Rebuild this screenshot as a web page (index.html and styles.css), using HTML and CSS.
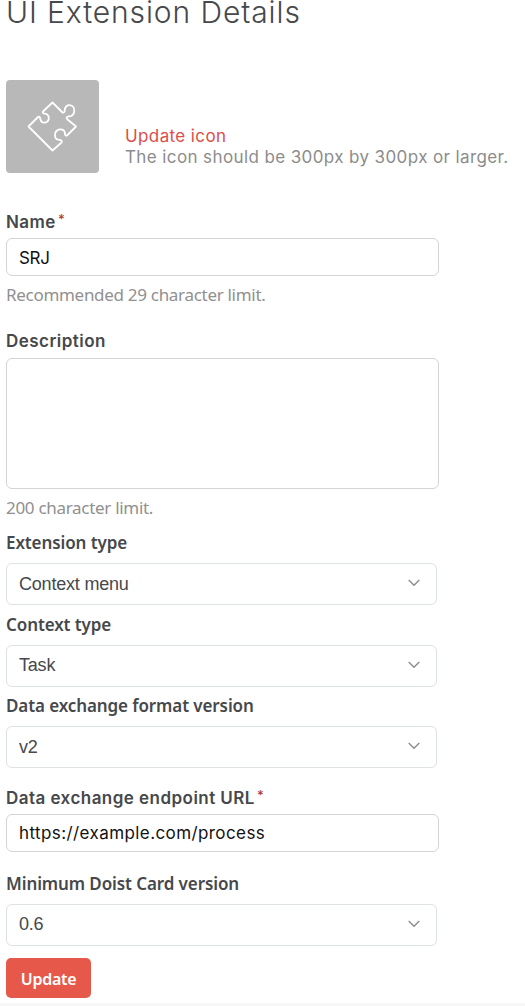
FILE: index.html
```html
<!DOCTYPE html>
<html lang="en">
<head>
<meta charset="utf-8">
<title>UI Extension Details</title>
<link rel="stylesheet" href="styles.css">
</head>
<body>
<main class="page">
  <h1 class="title">UI Extension Details</h1>
  <section class="icon-row">
    <div class="icon-box">
      <svg width="93" height="93" viewBox="0 0 93 93" fill="none" stroke="#fff" stroke-width="1.8" stroke-linejoin="round"><path d="M46.500 22.500L56 32C57.500 33.500 59 32 58.700 30.500C59 22.500 69 24 68.300 31C68 35 65 36.500 62 36.500C60 37 60.500 38.500 61.500 39.500L70 46.500L61.500 55C60 56.500 58.500 55 59 53C58 47 48.500 48.500 49 56C49.200 59 51.500 60 54.500 60C56 60.500 56.500 61.500 55 63L46.500 70.500L22.500 46.500L31.500 37.500C33 36 34.500 37 34.300 39C35.500 44.500 43 43.500 42.800 37.500C42.500 34.500 40 33.500 37.500 33.300C36.500 33 36.500 32 37.500 31Z"/></svg>
    </div>
    <div class="icon-copy">
      <a class="update-link">Update icon</a>
      <p class="icon-note">The icon should be 300px by 300px or larger.</p>
    </div>
  </section>
  <form class="form">
    <div class="field field-name">
      <label class="label inter">Name<sup class="req">*</sup></label>
      <div class="input short">SRJ</div>
      <p class="help">Recommended 29 character limit.</p>
    </div>
    <div class="field field-description">
      <label class="label inter">Description</label>
      <div class="input area"></div>
      <p class="help">200 character limit.</p>
    </div>
    <div class="field field-ext">
      <label class="label">Extension type</label>
      <div class="select">Context menu<svg class="chevron" viewBox="0 0 12 8"><path d="M.7 1L6 6.300L11.300 1"/></svg></div>
    </div>
    <div class="field field-context">
      <label class="label">Context type</label>
      <div class="select raised">Task<svg class="chevron" viewBox="0 0 12 8"><path d="M.7 1L6 6.300L11.300 1"/></svg></div>
    </div>
    <div class="field field-format">
      <label class="label">Data exchange format version</label>
      <div class="select">v2<svg class="chevron" viewBox="0 0 12 8"><path d="M.7 1L6 6.300L11.300 1"/></svg></div>
    </div>
    <div class="field field-url">
      <label class="label inter">Data exchange endpoint URL<sup class="req">*</sup></label>
      <div class="input">https://example.com/process</div>
    </div>
    <div class="field field-card">
      <label class="label">Minimum Doist Card version</label>
      <div class="select raised">0.6<svg class="chevron" viewBox="0 0 12 8"><path d="M.7 1L6 6.300L11.300 1"/></svg></div>
    </div>
    <button class="button" type="button">Update</button>
  </form>
</main>
<footer class="footer"></footer>
</body>
</html>
```
FILE: styles.css
```css
* { box-sizing: border-box; }
body { margin: 0; height: 1006px; overflow: hidden; background: #fff; color: #46484b; font-family: Inter, sans-serif; font-size: 17px; display: flex; flex-direction: column; }
p, h1 { margin: 0; }
.page { height: 1003px; padding-left: 6px; flex: none; }
.title { height: 80px; margin-top: -6px; margin-bottom: 6px; font-size: 30px; line-height: 36px; font-weight: 300; white-space: nowrap; letter-spacing: .9px; }
.icon-row { display: flex; height: 93px; gap: 26px; }
.icon-box { width: 93px; height: 93px; border-radius: 4px; background: #b8b8b8; }
.icon-box svg { display: block; }
.icon-copy { padding-top: 46px; line-height: 21px; white-space: nowrap; letter-spacing: .39px; }
.update-link { display: block; color: #dc4c4a; }
.icon-note { color: #8c8c8c; }
.form { padding-top: 37px; }
.label { display: flex; height: 28px; line-height: 24px; font-family: "Noto Sans", sans-serif; font-weight: 600; letter-spacing: -.1px; white-space: nowrap; }
.inter { font-family: Inter, sans-serif; letter-spacing: .46px; }
.req { font-size: 13px; line-height: 18px; font-weight: 500; color: #b03a30; margin-left: 2px; }
.input { display: flex; align-items: center; width: 433px; height: 38px; padding-left: 12px; border: 1px solid #d4d4d4; border-radius: 6px; color: #111; letter-spacing: .41px; }
.short { padding-top: 2px; letter-spacing: -.3px; }
.area { height: 131px; }
.help { height: 24px; margin-top: 7px; font-family: "Noto Sans", sans-serif; font-weight: 400; line-height: 24px; letter-spacing: -.3px; color: #909090; white-space: nowrap; }
.select { display: flex; align-items: center; justify-content: space-between; width: 431px; height: 42px; padding: 0 16px 0 12px; border: 1px solid #dde2e2; border-radius: 6px; font-family: "Liberation Sans", sans-serif; font-size: 18px; letter-spacing: -.2px; }
.raised { padding-bottom: 2px; }
.chevron { width: 12px; height: 8px; margin-top: -2px; fill: none; stroke: #8d8d8d; stroke-width: 1.4; }
.raised .chevron { margin-top: 0; }
.field-name { height: 119px; }
.field-description { height: 202px; }
.field-description .label { height: 29px; }
.field-ext { height: 82px; }
.field-context, .field-format { height: 81px; }
.field-ext .label, .field-context .label, .field-format .label { height: 32px; }
.field-url { height: 90px; padding-top: 11px; }
.field-card { height: 92px; padding-top: 7px; }
.field-card .label { height: 32px; }
.button { display: block; width: 85px; height: 40px; margin-top: 1px; padding: 2px 0 0; border: 0; border-radius: 5px; background: #e5584a; color: #fff; font: 600 16px "Noto Sans", sans-serif; letter-spacing: -.3px; }
.footer { height: 3px; background: #f7f7f7; }
```
